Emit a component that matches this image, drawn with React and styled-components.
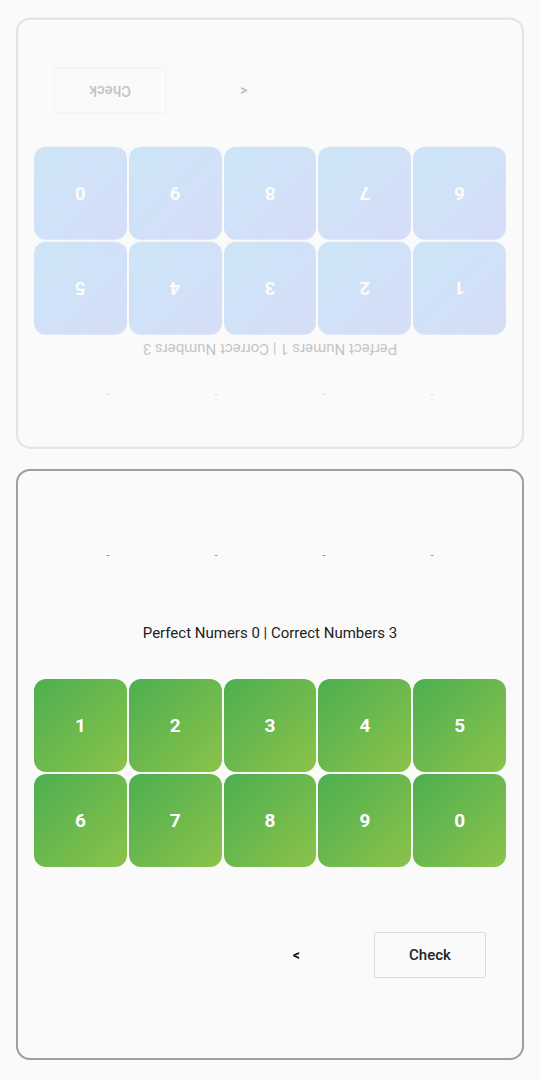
import React from "react";
import styled, { createGlobalStyle } from "styled-components";

const GlobalStyle = createGlobalStyle`
    html, body {
        margin: 0;
        padding: 0;
        background: #fafafa;
        font-family: Roboto, "Liberation Sans", Arial, sans-serif;
    }
    * { box-sizing: border-box; }
`;

const Screen = styled.div`
    height: 100vh;
    display: flex;
    flex-direction: column;
    gap: 20px;
    padding: 18px 16px 20px 16px;
`;

const Panel = styled.div`
    flex: ${({ $grow }) => $grow} 1 0;
    min-height: 0;
    display: flex;
    flex-direction: column;
    justify-content: space-evenly;
    padding: 0 16px;
    border: 2px solid #9e9e9e;
    border-radius: 14px;
    opacity: ${({ $faded }) => ($faded ? 0.25 : 1)};
    transform: ${({ $flipped }) => ($flipped ? "rotate(180deg)" : "none")};
`;

const DashRow = styled.div`
    height: 79px;
    flex-shrink: 0;
    display: flex;
    justify-content: center;
    padding-top: 41px;
`;

const DashCell = styled.div`
    width: 108px;
    height: 16px;
    line-height: 16px;
    text-align: center;
    font-size: 11px;
    color: ${({ $color }) => $color};
`;

const Score = styled.div`
    height: 22px;
    flex-shrink: 0;
    line-height: 22px;
    text-align: center;
    font-size: 15px;
    color: #222;
`;

const Pad = styled.div`
    flex-shrink: 0;
    display: grid;
    grid-template-columns: repeat(5, 1fr);
    gap: 2px;
`;

const Key = styled.div`
    aspect-ratio: 1;
    border-radius: 12px;
    display: flex;
    align-items: center;
    justify-content: center;
    color: #fff;
    font-size: 19px;
    font-weight: 700;
    background: linear-gradient(135deg, ${({ $from }) => $from}, ${({ $to }) => $to});
`;

const CheckRow = styled.div`
    height: 119px;
    flex-shrink: 0;
    display: flex;
    justify-content: flex-end;
    align-items: flex-start;
    gap: 74px;
    padding: 29px 20px 0 0;
`;

const Back = styled.div`
    height: 46px;
    line-height: 46px;
    font-size: 14px;
    font-weight: 700;
    color: #111;
`;

const CheckButton = styled.div`
    width: 112px;
    height: 46px;
    line-height: 44px;
    text-align: center;
    border: 1px solid #dcdcdc;
    border-radius: 2px;
    font-size: 15px;
    font-weight: 500;
    color: #222;
`;

const KEYS = [1, 2, 3, 4, 5, 6, 7, 8, 9, 0];

function Board({ perfect, correct, from, to, dash, ...panelProps }) {
    return (
        <Panel {...panelProps}>
            <DashRow>
                {[0, 1, 2, 3].map((i) => (
                    <DashCell key={i} $color={dash}>-</DashCell>
                ))}
            </DashRow>
            <Score>Perfect Numers {perfect} | Correct Numbers {correct}</Score>
            <Pad>
                {KEYS.map((k) => (
                    <Key key={k} $from={from} $to={to}>{k}</Key>
                ))}
            </Pad>
            <CheckRow>
                <Back>&lt;</Back>
                <CheckButton>Check</CheckButton>
            </CheckRow>
        </Panel>
    );
}

export default function App() {
    return (
        <>
            <GlobalStyle />
            <Screen>
                {/* opponent's board, seen upside down */}
                <Board
                    $grow={430}
                    $faded
                    $flipped
                    perfect={1}
                    correct={3}
                    from="#6a8ef2"
                    to="#4aa8f0"
                    dash="#777"
                />
                <Board
                    $grow={592}
                    perfect={0}
                    correct={3}
                    from="#4caf50"
                    to="#8bc34a"
                    dash="#4caf50"
                />
            </Screen>
        </>
    );
}
